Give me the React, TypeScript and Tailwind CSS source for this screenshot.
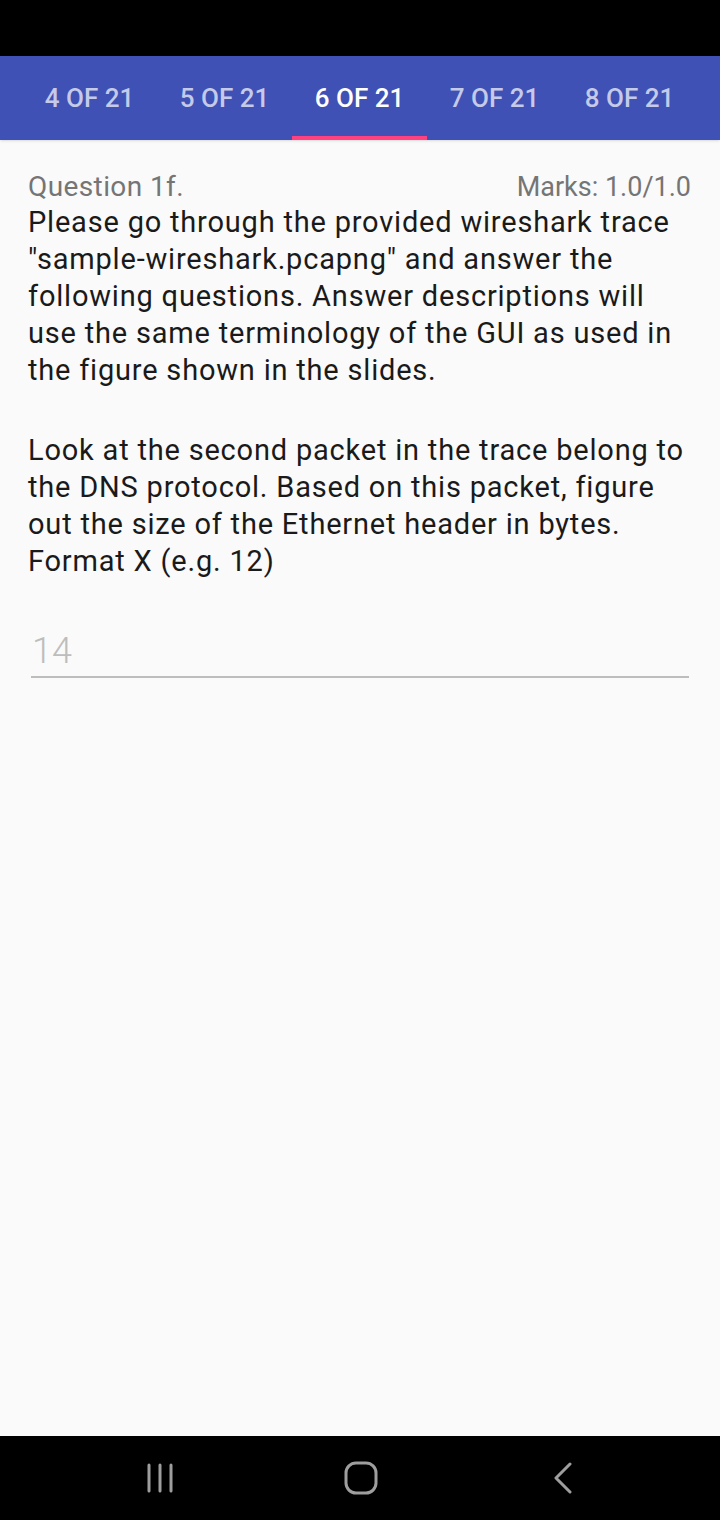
import React from 'react';

const tabs = ['4 of 21', '5 of 21', '6 of 21', '7 of 21', '8 of 21'];

const App: React.FC = () => {
  const active = 2;

  return (
    <div className="w-[720px] h-[1520px] flex flex-col bg-[#fafafa] font-['Roboto',sans-serif]">
      {/* status bar */}
      <div className="h-[56px] bg-black shrink-0" />

      {/* tabs */}
      <div className="h-[84px] bg-[#3f51b5] flex px-[22px] shrink-0 shadow-sm">
        {tabs.map((t, i) => (
          <div
            key={t}
            className={`w-[135px] flex flex-col items-center ${i === active ? 'text-white' : 'text-[#c5cae9]'}`}
          >
            <div className="flex-1 flex items-center pt-[4px] text-[26px] font-medium uppercase">
              {t}
            </div>
            <div className={`h-[4px] w-full ${i === active ? 'bg-[#ff4081]' : 'bg-transparent'}`} />
          </div>
        ))}
      </div>

      {/* content */}
      <div className="flex-1 px-[28px] pt-[29px]">
        <div className="flex justify-between items-baseline text-[#757575] leading-[36px]">
          <span className="text-[28px] tracking-[0.4px]">Question 1f.</span>
          <span className="text-[27px] mr-[1px]">Marks: 1.0/1.0</span>
        </div>
        <div className="text-[#1a1a1a] text-[29px] leading-[37px] tracking-[0.8px] -mt-[1px]">
          <p>
            Please go through the provided wireshark trace "sample-wireshark.pcapng" and answer the
            following questions. Answer descriptions will use the same terminology of the GUI as used in
            the figure shown in the slides.
          </p>
          <p className="mt-[43px]">
            Look at the second packet in the trace belong to the DNS protocol. Based on this packet, figure
            out the size of the Ethernet header in bytes. Format X (e.g. 12)
          </p>
        </div>

        <div className="mt-[49px] mx-[3px] border-b-2 border-[#bdbdbd] pb-[3px]">
          <div className="text-[36px] leading-[44px] text-[#bdbdbd] font-light pl-[1px]">14</div>
        </div>
      </div>

      {/* nav bar */}
      <div className="h-[84px] bg-black shrink-0 flex items-center pl-[146px]">
        <svg width="30" height="30" viewBox="0 0 30 30">
          <g stroke="#9e9e9e" strokeWidth="3" strokeLinecap="round">
            <line x1="3" y1="2" x2="3" y2="28" />
            <line x1="14" y1="2" x2="14" y2="28" />
            <line x1="25" y1="2" x2="25" y2="28" />
          </g>
        </svg>
        <svg width="34" height="34" viewBox="0 0 34 34" className="ml-[168px]">
          <rect x="2" y="2" width="30" height="30" rx="10" fill="none" stroke="#9e9e9e" strokeWidth="3" />
        </svg>
        <svg width="20" height="32" viewBox="0 0 20 32" className="ml-[175px]">
          <polyline points="17,2 3,16 17,30" fill="none" stroke="#9e9e9e" strokeWidth="3" strokeLinecap="round" strokeLinejoin="round" />
        </svg>
      </div>
    </div>
  );
};

export default App;
